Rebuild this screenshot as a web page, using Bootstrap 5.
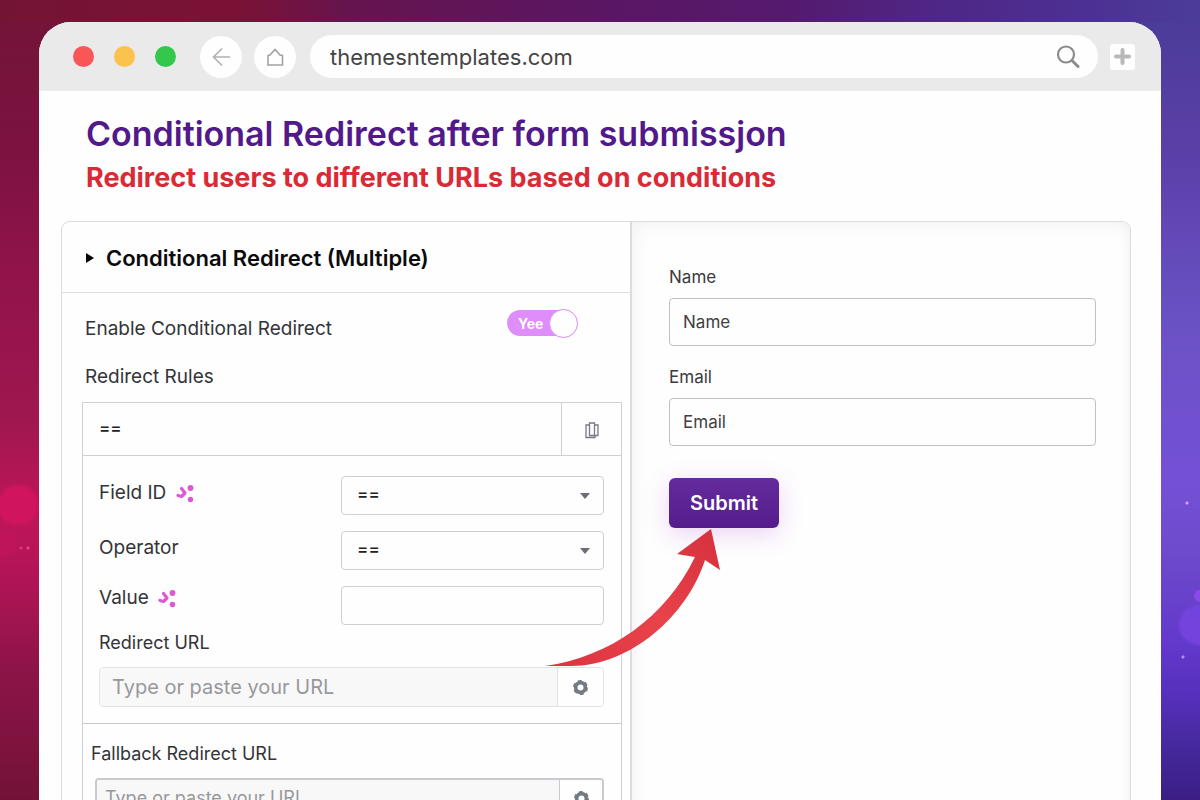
<!DOCTYPE html>
<html lang="en">
<head>
<meta charset="utf-8">
<meta name="viewport" content="width=device-width, initial-scale=1">
<title>Conditional Redirect after form submission</title>
<link rel="stylesheet" href="https://cdn.jsdelivr.net/npm/bootstrap@5.3.0/dist/css/bootstrap.min.css">
<style>
  body { font-family: Inter, "Liberation Sans", sans-serif; font-size: 18px; line-height: 24px; color: #333438; }
  .stage {
    height: 100vh; overflow: hidden; padding: 22px 39px 0;
    background:
      radial-gradient(circle 22px at 18px 505px, #d0155c 0 80%, transparent),
      radial-gradient(circle 14px at 4px 543px, #c01459 0 80%, transparent),
      radial-gradient(circle 2px at 21px 548px, #d8357a 0 60%, transparent),
      radial-gradient(circle 2px at 28px 548px, #e04585 0 60%, transparent),
      radial-gradient(circle 2px at calc(100% - 13px) 503px, #d9a0ff 0 50%, transparent),
      radial-gradient(circle 2px at calc(100% - 17px) 657px, #b48cf5 0 50%, transparent),
      radial-gradient(circle 7px at 100% 596px, #8a4ae6 0 70%, transparent),
      radial-gradient(circle 22px at calc(100% - 1px) 625px, #7443dd 0 80%, transparent),
      linear-gradient(#741439 0, #7c1240 130px, #8f1349 240px, #a0174f 400px, #bf1659 490px, #b31457 550px, #8c1447 650px, #6f1235 800px) 0 22px / 50% 100% no-repeat,
      linear-gradient(#4c3c99 0, #5b3fa8 130px, #6249b6 210px, #6c52c6 320px, #7450d6 460px, #6d4bcb 530px, #6338cc 620px, #5730bd 670px, #43289a 730px, #37187b 800px) 100% 22px / 50% 100% no-repeat,
      linear-gradient(90deg, #741434 0, #7b1236 20%, #66144e 29%, #5a1663 50%, #551a6e 66%, #4f2583 76%, #4c3093 90%, #4c3c99 100%);
  }
  .browser { min-height: 100%; background: #fefefe; border-radius: 32px 32px 0 0; overflow: hidden; }
  .chrome { height: 69px; background: #eaeaea; padding: 0 26px 0 34px; }
  .light { width: 21px; height: 21px; border-radius: 50%; }
  .light-red { background: #f95757; }
  .light-amber { background: #fcc24e; }
  .light-green { background: #33c84b; }
  .round-btn { width: 42px; height: 42px; border-radius: 50%; border: 0; background: #fefefe; padding: 0 0 2px; }
  .address { height: 43px; border-radius: 22px; background: #fefefe; padding: 0 18px 0 20px; margin: 0 12px 0 14px; }
  .address input { border: 0; background: none; font-size: 22px; color: #444; outline: 0; min-width: 0; padding: 0; }
  .plus-btn { width: 25px; height: 26px; border: 0; border-radius: 3px; background: #fefefe; padding: 0; }
  .content { padding: 22px 30px 0 22px; }
  .titles { padding: 0 25px; }
  h1 { font-size: 34px; line-height: 42px; font-weight: 600; color: #51198a; margin: 0; }
  h2 { font-size: 27px; line-height: 36px; font-weight: 700; color: #d92a35; margin: 5px 0 0; }
  .panels { margin-top: 25px; border: 1px solid #dcdce0; border-radius: 9px 9px 0 0; min-height: 640px; }
  .settings { flex: 0 0 calc(53% + 2px); min-width: 0; }
  .preview { min-width: 0; border-left: 2px solid #dcdce0; padding: 43px 34px 0 37px; box-shadow: inset 4px 4px 24px -8px #ececee, inset -3px 0 14px -6px #eeeef0; border-radius: 0 9px 0 0; }
  .panel-head { height: 71px; border-bottom: 1px solid #dfdfe2; padding: 2px 23px 0; font-size: 22px; font-weight: 600; color: #0b0b0c; gap: 12px; }
  .panel-body { padding: 0 8px 0 20px; }
  .enable-row { padding: 16px 44px 0 3px; }
  .wide-label { font-size: 19px; }
  .rules-title { padding: 24px 3px 13px; }
  .toggle { width: 71px; height: 29px; }
  .toggle input { appearance: none; width: 68px; height: 26px; margin: 1px 0 0; display: block; border-radius: 13px; background: #de8dfa; }
  .toggle .knob { width: 29px; height: 29px; right: 0; top: 0; border-radius: 50%; background: #fefefe; border: 1px solid #d98af2; pointer-events: none; }
  .toggle .word { left: 11px; top: 3px; font-size: 14px; font-weight: 700; color: #fff; pointer-events: none; }
  .rules { border: 1px solid #cfcfd6; min-height: 420px; }
  .rule-head { height: 53px; border-bottom: 1px solid #cfcfd6; font-size: 17px; font-weight: 500; color: #222; }
  .rule-head .rule-name { padding: 0 16px 3px; }
  .copy-btn { width: 60px; border: 0; border-left: 1px solid #cfcfd6; background: none; padding: 0; }
  .rule-body { padding: 20px 17px 0 16px; border-bottom: 1px solid #c6c6cd; height: 268px; }
  .row-label { padding-top: 5px; font-size: 19px; }
  .field { height: 39px; border: 1px solid #cfcfd4; border-radius: 4px; background-color: #fefefe; color: #222; font-size: 17px; font-weight: 500; padding: 0 15px 3px; }
  .fieldbox { width: 263px; }
  select.field { appearance: none; background-image: url("data:image/svg+xml,%3Csvg xmlns='http://www.w3.org/2000/svg' width='10' height='6'%3E%3Cpath d='M0 0h10L5 6z' fill='%236b6e76'/%3E%3C/svg%3E"); background-repeat: no-repeat; background-position: right 13px center; }
  .url-label { display: block; margin: 6px 0 12px; }
  .url { height: 40px; border: 1px solid #e2e2e5; border-radius: 4px; overflow: hidden; }
  .url input { border: 0; background: #f8f8f9; font-size: 20px; padding: 0 12px; min-width: 0; color: #444; }
  .url input::placeholder { color: #98989b; opacity: 1; }
  .url button { width: 46px; border: 0; border-left: 1px solid #e2e2e5; background: #fefefe; padding: 0 0 2px; }
  .fallback { padding: 12px 17px 0 12px; }
  .fallback .url-label { margin-left: -4px; }
  .fallback .url, .fallback .url button { border-color: #c9c9ce; }
  .fallback .url { border-width: 2px; }
  .fallback .url input { font-size: 18px; padding: 0 8px; }
  .fallback .url button { width: 43px; }
  .preview label { font-size: 17px; line-height: 24px; display: block; color: #3a3a3d; margin-bottom: 9px; }
  .preview .form-control { height: 48px; border: 1px solid #bfbfc5; border-radius: 4px; font-size: 17px; padding: 0 13px; background: #fefefe; margin-bottom: 19px; }
  .preview .form-control::placeholder { color: #3f3f42; opacity: 1; }
  .submit-wrap { margin-top: 32px; }
  .submit { width: 110px; height: 50px; border-radius: 6px; border: 0; padding: 0; color: #fff; font-size: 20px; font-weight: 600; background: linear-gradient(#632b9c, #551c8d); box-shadow: 0 6px 24px rgba(170, 60, 210, .22); }
  .arrow { left: -125px; top: 42px; pointer-events: none; z-index: 2; }
</style>
</head>
<body>
<div class="stage">
  <main class="browser">
    <header class="chrome d-flex align-items-center">
      <div class="d-flex me-4 gap-3">
        <span class="light light-red"></span>
        <span class="light light-amber ms-1"></span>
        <span class="light light-green ms-1"></span>
      </div>
      <button class="round-btn me-2" aria-label="Back"><svg width="20" height="20" viewBox="0 0 20 20" fill="none" stroke="#b0b0b0" stroke-width="1.6"><path d="M19 10H3M11 1.500L2.500 10l8.500 8.500"/></svg></button>
      <button class="round-btn ms-1" aria-label="Home"><svg width="18" height="18" viewBox="0 0 18 18" fill="none" stroke="#a2a2a2" stroke-width="1.6"><path d="M2 7.500L4 7 9 1.500 14 7l2.500 .5V17H2z"/></svg></button>
      <div class="address flex-grow-1 d-flex align-items-center">
        <input class="flex-grow-1" type="text" aria-label="Address" value="themesntemplates.com">
        <svg width="24" height="24" viewBox="0 0 24 24" fill="none" stroke="#8c8c8c" stroke-width="2.200" stroke-linecap="round"><circle cx="10" cy="9.500" r="8"/><path d="M16 15.500l6 6" stroke-width="3"/></svg>
      </div>
      <button class="plus-btn d-flex align-items-center justify-content-center" aria-label="New tab"><svg width="17" height="17" viewBox="0 0 17 17" stroke="#b9b9b9" stroke-width="4" stroke-linecap="round"><path d="M8.500 2v13M2 8.500h13"/></svg></button>
    </header>
    <div class="content">
      <div class="titles">
        <h1>Conditional Redirect after form submissjon</h1>
        <h2>Redirect users to different URLs based on conditions</h2>
      </div>
      <div class="panels d-flex">
        <section class="settings">
          <div class="panel-head d-flex align-items-center"><svg width="9" height="10" viewBox="0 0 9 10"><path d="M1 0l8 5-8 5z"/></svg>Conditional Redirect (Multiple)</div>
          <div class="panel-body">
            <div class="enable-row d-flex justify-content-between">
              <label for="enable" class="mt-2 wide-label">Enable Conditional Redirect</label>
              <div class="toggle position-relative"><input type="checkbox" role="switch" id="enable" checked><span class="word position-absolute">Yee</span><span class="knob position-absolute"></span></div>
            </div>
            <div class="rules-title wide-label">Redirect Rules</div>
            <div class="rules">
              <div class="rule-head d-flex">
                <div class="rule-name flex-grow-1 d-flex align-items-center">==</div>
                <button class="copy-btn" aria-label="Duplicate rule"><svg width="14" height="17" viewBox="0 0 14 17" fill="none" stroke="#777a82" stroke-width="1.300"><path d="M4.500 3H1v12.500h9v-2M4.500 1h5v12.500h-5zM9.500 3H13v10.500H9.500"/></svg></button>
              </div>
              <div class="rule-body">
                <div class="d-flex justify-content-between mb-3">
                  <label for="fid" class="row-label">Field ID <svg class="ms-1" width="18" height="18" viewBox="0 0 18 18" fill="#dd58d2"><circle cx="14.500" cy="3" r="2.900"/><circle cx="14.500" cy="14.500" r="2.700"/><path d="M5.500 3.500l3.500 4.500-3.500 3.500-3.500-1" fill="none" stroke="#dd58d2" stroke-width="3.200" stroke-linecap="round" stroke-linejoin="round"/></svg></label>
                  <select class="field fieldbox" id="fid"><option>==</option></select>
                </div>
                <div class="d-flex justify-content-between mb-3">
                  <label for="op" class="row-label">Operator</label>
                  <select class="field fieldbox" id="op"><option>==</option></select>
                </div>
                <div class="d-flex justify-content-between">
                  <label for="val" class="wide-label">Value <svg class="ms-1" width="18" height="18" viewBox="0 0 18 18" fill="#dd58d2"><circle cx="14.500" cy="3" r="2.900"/><circle cx="14.500" cy="14.500" r="2.700"/><path d="M5.500 3.500l3.500 4.500-3.500 3.500-3.500-1" fill="none" stroke="#dd58d2" stroke-width="3.200" stroke-linecap="round" stroke-linejoin="round"/></svg></label>
                  <input class="field fieldbox" type="text" id="val">
                </div>
                <label for="url" class="url-label">Redirect URL</label>
                <div class="url d-flex"><input class="flex-grow-1" type="text" id="url" placeholder="Type or paste your URL"><button aria-label="Link options"><svg width="15" height="15" viewBox="0 0 14 14" fill="none" stroke="#747a83"><circle cx="7" cy="7" r="4.500" stroke-width="3.400"/><circle cx="7" cy="7" r="6" stroke-width="2" stroke-dasharray="3.500 2.780"/></svg></button></div>
              </div>
              <div class="fallback">
                <label for="fb" class="url-label">Fallback Redirect URL</label>
                <div class="url d-flex"><input class="flex-grow-1" type="text" id="fb" placeholder="Type or paste your URL"><button aria-label="Fallback link options"><svg width="15" height="15" viewBox="0 0 14 14" fill="none" stroke="#747a83"><circle cx="7" cy="7" r="4.500" stroke-width="3.400"/><circle cx="7" cy="7" r="6" stroke-width="2" stroke-dasharray="3.500 2.780"/></svg></button></div>
              </div>
            </div>
          </div>
        </section>
        <section class="preview flex-grow-1">
          <label for="nm">Name</label>
          <input class="form-control" id="nm" type="text" placeholder="Name">
          <label for="em">Email</label>
          <input class="form-control" id="em" type="email" placeholder="Email">
          <div class="submit-wrap position-relative">
            <button class="submit">Submit</button>
            <svg class="arrow position-absolute" width="178" height="148" viewBox="0 0 178 148"><defs><linearGradient id="red" x1="0" y1="1" x2="1" y2="0"><stop offset="0" stop-color="#dc3543"/><stop offset=".5" stop-color="#e8424a"/><stop offset="1" stop-color="#d5303d"/></linearGradient></defs><path fill="url(#red)" d="M167 9L176 50 161 40C143 96 86 147 25 146L1 146C66 137 122 97 151 37L133 34z"/></svg>
          </div>
        </section>
      </div>
    </div>
  </main>
</div>
<script src="https://cdn.jsdelivr.net/npm/bootstrap@5.3.0/dist/js/bootstrap.bundle.min.js"></script>
</body>
</html>
